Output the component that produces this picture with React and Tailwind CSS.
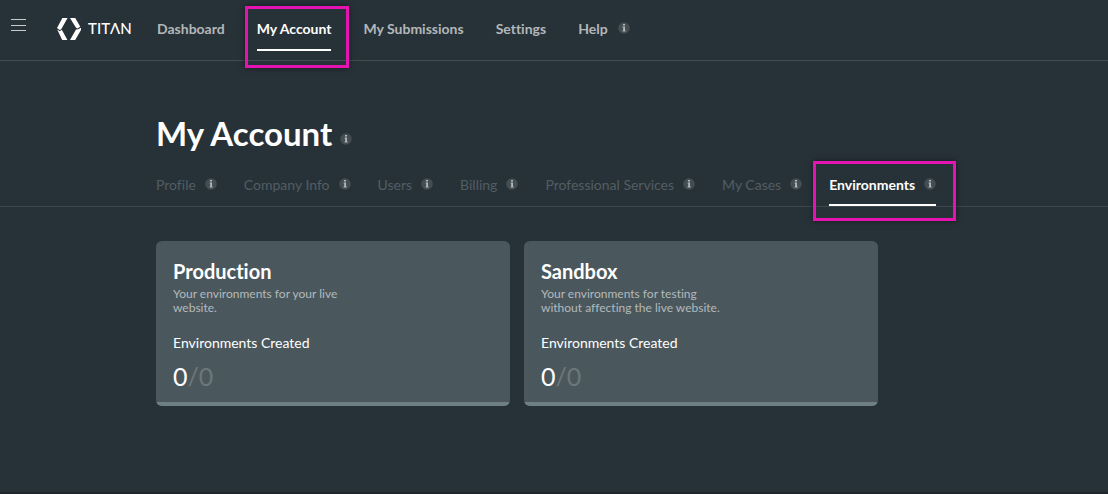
import React, { useState } from 'react';

const navItems = [
    { label: "Dashboard" },
    { label: "My Account" },
    { label: "My Submissions" },
    { label: "Settings" },
    { label: "Help", info: true },
];

const tabs = [
    "Profile",
    "Company Info",
    "Users",
    "Billing",
    "Professional Services",
    "My Cases",
    "Environments",
];

const cards = [
    {
        title: "Production",
        lines: ["Your environments for your live", "website."],
        used: 0,
        total: 0,
    },
    {
        title: "Sandbox",
        lines: ["Your environments for testing", "without affecting the live website."],
        used: 0,
        total: 0,
    },
];

function InfoIcon({ className = "" }) {
    return (
        <svg viewBox="0 0 12 12" className={`h-3 w-3 shrink-0 ${className}`} aria-hidden="true">
            <circle cx="6" cy="6" r="5.8" fill="#434d52" />
            <path d="M5 2h2v1.4H5zM4.6 4.6H7V8.6H7.6V9.4H4.6V8.6H5.2V5.4H4.6z" fill="#b4b9bb" />
        </svg>
    );
}

function Logo() {
    return (
        <a href="#home" aria-label="Titan" className="flex w-[100px] items-start gap-[7px] text-white">
            <svg viewBox="0 0 24 22" className="h-[22px] w-6 shrink-0" fill="currentColor" aria-hidden="true">
                <path d="M5.4 0H10.6L4.8 10.2 3 12.2 0 10z" />
                <path d="M0.2 11.4L2.8 13.2 4.8 11.8 10.4 22H5.2z" />
                <path d="M13 0H18.2L23.2 8.6 20.8 10.4 19 9.8z" />
                <path d="M21 11.2L24 9.8V12L18.2 22H13L19 11.4z" />
            </svg>
            <span className="text-[15px] leading-5 font-medium">TITΛN</span>
        </a>
    );
}

export default function App() {
    const [page, setPage] = useState("My Account");
    const [tab, setTab] = useState("Environments");

    return (
        <div className="min-h-screen border-b-2 border-[#22272e] bg-[#273238] font-['Lato',sans-serif] [font-variant-ligatures:none]">
            <header className="flex h-[61px] border-b border-[#424c51]">
                <button type="button" aria-label="Menu" className="mt-[19px] ml-[11px] h-3 w-[15px] cursor-pointer">
                    <svg viewBox="0 0 15 12" className="h-3 w-[15px]" fill="#c8cbcd" aria-hidden="true">
                        <path d="M0 0h15v1H0zM0 6h15v1H0zM0 11h15v1H0z" />
                    </svg>
                </button>
                <div className="mt-[18px] ml-[31px]">
                    <Logo />
                </div>
                <nav className="flex h-[51px] gap-8">
                    {navItems.map((item) => (
                        <a
                            key={item.label}
                            href="#nav"
                            onClick={() => setPage(item.label)}
                            className={`relative flex items-start gap-[10px] border-b-2 pt-[19px] text-sm leading-5 font-bold whitespace-nowrap ${
                                page === item.label ? "border-white text-white" : "border-transparent text-[#b4b7b9]"
                            }`}
                        >
                            {item.label}
                            {item.info && <InfoIcon className="mt-[3px]" />}
                            {page === item.label && (
                                <span className="pointer-events-none absolute top-[6px] -right-[18px] -bottom-[19px] -left-3 border-3 border-[#e413b1] shadow-[0_0_6px_rgba(0,0,0,0.5)]" />
                            )}
                        </a>
                    ))}
                </nav>
            </header>

            <main>
                <div className="border-b border-[#3d474b] pl-[156px]">
                    <h1 className="flex items-end gap-2 pt-[52px] text-[33px] leading-10 font-bold text-white">
                        My Account
                        <InfoIcon className="mb-2" />
                    </h1>
                    <div className="mt-[22px] flex gap-[27px]">
                        {tabs.map((name) => (
                            <a
                                key={name}
                                href="#tab"
                                onClick={() => setTab(name)}
                                className={`relative flex h-[31px] items-start gap-[9px] border-b-2 text-sm leading-5 whitespace-nowrap ${
                                    tab === name
                                        ? "border-white font-bold text-white"
                                        : "border-transparent text-[#535d62]"
                                }`}
                            >
                                {name}
                                <InfoIcon className="mt-[3px]" />
                                {tab === name && (
                                    <span className="pointer-events-none absolute -top-[14px] -right-5 -bottom-[17px] -left-4 border-3 border-[#e413b1] shadow-[0_0_6px_rgba(0,0,0,0.5)]" />
                                )}
                            </a>
                        ))}
                    </div>
                </div>

                <section className="ml-[156px] grid max-w-[722px] grid-cols-2 gap-[14px] pt-[34px]">
                    {cards.map((card) => (
                        <article key={card.title} className="overflow-hidden rounded-md bg-[#4a585e]">
                            <div className="px-[17px] pt-[18px] pb-[10px]">
                                <h2 className="text-xl leading-6 font-bold text-white">{card.title}</h2>
                                <p className="mt-1 text-xs leading-[14px] text-[#b4b9bb]">
                                    {card.lines.map((line) => (
                                        <span key={line} className="block">{line}</span>
                                    ))}
                                </p>
                                <p className="mt-[18px] text-sm leading-5 text-white">Environments Created</p>
                                <p className="mt-[7px] text-[25px] leading-8 text-white">
                                    {card.used}
                                    <span className="text-[#6d767b]">/{card.total}</span>
                                </p>
                            </div>
                            <div className="h-1 bg-[#6f7f86]" />
                        </article>
                    ))}
                </section>
            </main>
        </div>
    );
}
